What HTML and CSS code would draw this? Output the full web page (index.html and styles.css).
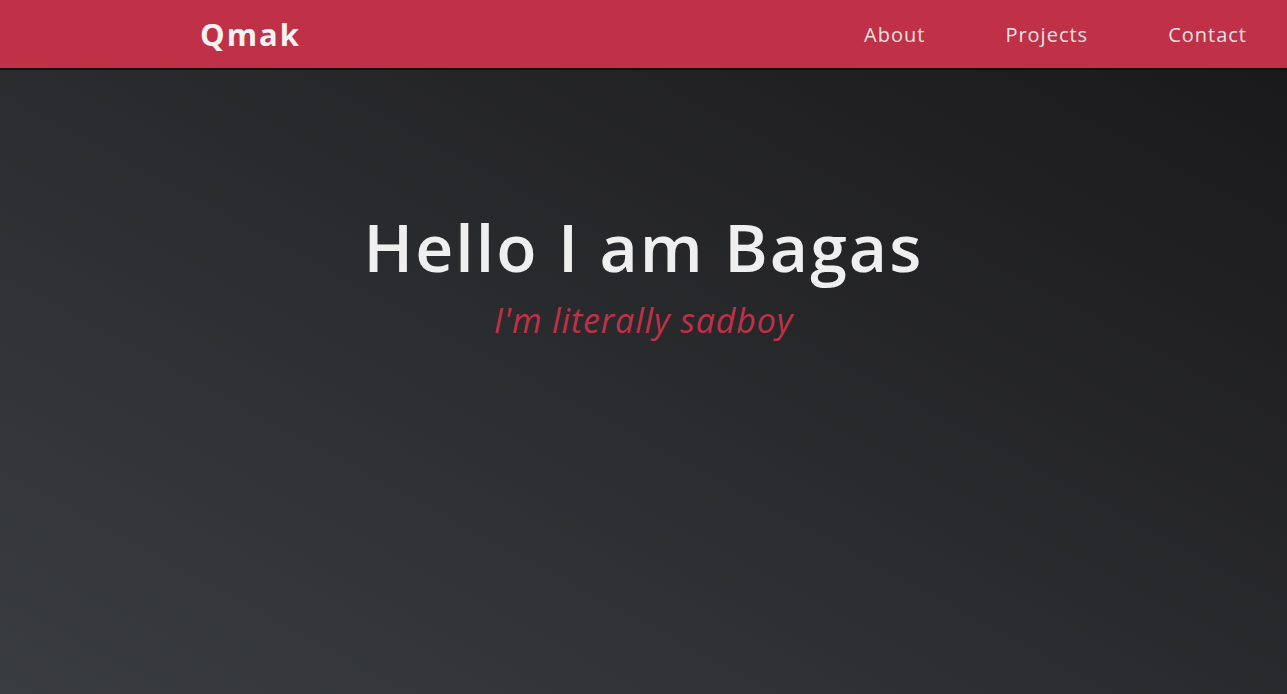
FILE: index.html
```html
<!DOCTYPE html>
<html lang="en">
<head>
<meta charset="utf-8">
<title>Qmak</title>
<link rel="stylesheet" href="styles.css">
</head>
<body>
<header class="navbar">
  <a class="logo" href="#">Qmak</a>
  <nav class="nav-links">
    <a href="#">About</a>
    <a href="#">Projects</a>
    <a href="#">Contact</a>
  </nav>
</header>
<main class="hero">
  <h1 class="hero-title">Hello I am Bagas</h1>
  <p class="hero-sub">I'm literally sadboy</p>
</main>
</body>
</html>
```
FILE: styles.css
```css
* { box-sizing: border-box; margin: 0; padding: 0; }
html, body { height: 100%; }
body {
  font-family: "Open Sans", "DejaVu Sans", sans-serif;
  background-image: linear-gradient(to right top, #3a3d40, #181719);
  min-height: 694px;
  overflow: hidden;
}
.navbar {
  height: 70px;
  background: #c03147;
  border-bottom: 2px solid #111;
  display: flex;
  align-items: center;
  justify-content: space-between;
  padding: 0 40px 0 200px;
}
.logo {
  color: #f3f3f3;
  text-decoration: none;
  font-weight: 700;
  font-size: 31px;
  letter-spacing: 2px;
}
.nav-links {
  display: flex;
  gap: 80px;
}
.nav-links a {
  color: #e8e0e2;
  text-decoration: none;
  font-size: 20px;
  letter-spacing: 1px;
}
.hero {
  display: flex;
  flex-direction: column;
  align-items: center;
  padding-top: 136px;
}
.hero-title {
  color: #efefef;
  font-size: 66px;
  font-weight: 600;
  line-height: 80px;
  letter-spacing: 2.1px;
}
.hero-sub {
  color: #c03147;
  font-style: italic;
  font-weight: 400;
  font-size: 34px;
  line-height: 44px;
  letter-spacing: 0.85px;
  margin-top: 12px;
}
```
